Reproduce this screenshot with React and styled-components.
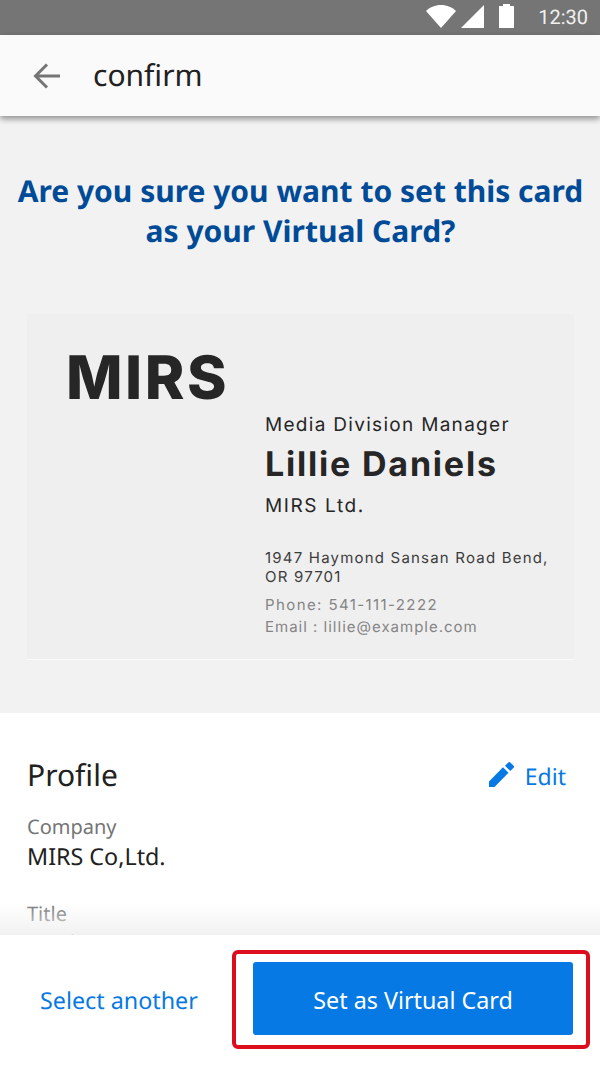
import styled, { createGlobalStyle } from "styled-components";

const GlobalStyle = createGlobalStyle`
  html, body {
    margin: 0;
    padding: 0;
    background: #fff;
    font-family: "Noto Sans", sans-serif;
    text-rendering: geometricPrecision;
  }
  * {
    box-sizing: border-box;
  }
`;

const App = () => (
  <Screen>
    <GlobalStyle />
    <StatusBar>
      <svg width="30" height="23" viewBox="0 0 30 23">
        <path d="M0 6C3.500 2.500 9 0 15 0s11.500 2.500 15 6L15 23z" fill="#fff" />
      </svg>
      <svg width="23" height="23" viewBox="0 0 23 23">
        <path d="M0 23L23 0v23z" fill="#fff" />
      </svg>
      <Battery />
      <Clock>12:30</Clock>
    </StatusBar>
    <Header>
      <svg width="30" height="30" viewBox="0 0 30 30">
        <path d="M28 15H5M15 3.500L3.500 15 15 26.500" fill="none" stroke="#757575" strokeWidth="3" />
      </svg>
      <HeaderTitle>confirm</HeaderTitle>
    </Header>
    <Main>
      <Question>
        Are you sure you want to set this card
        <br />
        as your Virtual Card?
      </Question>
      <Card>
        <Logo>MIRS</Logo>
        <CardInfo>
          <JobTitle>Media Division Manager</JobTitle>
          <Name>Lillie Daniels</Name>
          <CardCompany>MIRS Ltd.</CardCompany>
          <Address>
            1947 Haymond Sansan Road Bend,
            <br />
            OR 97701
          </Address>
          <Contact $spacing="1.400px">Phone: 541-111-2222</Contact>
          <Contact $spacing="1px">Email : lillie@example.com</Contact>
        </CardInfo>
      </Card>
    </Main>
    <Profile>
      <ProfileHead>
        <ProfileTitle>Profile</ProfileTitle>
        <EditLink>
          <svg width="26" height="26" viewBox="0 0 26 26">
            <path d="M0 20.500V26h5.500L19.500 11.800l-5.500-5.500zM21.300 10l3.300-3.300a1.400 1.400 0 0 0 0-2L21.300 1.400a1.400 1.400 0 0 0-2 0L16 4.700z" fill="#0779e4" />
          </svg>
          <EditLabel>Edit</EditLabel>
        </EditLink>
      </ProfileHead>
      <FieldLabel>Company</FieldLabel>
      <FieldValue>MIRS Co,Ltd.</FieldValue>
      <FieldLabel $spaced>Title</FieldLabel>
      <FieldValue>Media Division Manager</FieldValue>
    </Profile>
    <Footer>
      <SelectLink>Select another</SelectLink>
      <PrimaryButton>Set as Virtual Card</PrimaryButton>
      <Highlight />
    </Footer>
  </Screen>
);

const Screen = styled.div`
  position: relative;
  width: 600px;
  height: 1067px;
  overflow: hidden;
  display: flex;
  flex-direction: column;
  background: #fff;
`;

const StatusBar = styled.div`
  height: 35px;
  flex: none;
  background: #757575;
  display: flex;
  align-items: flex-start;
  justify-content: flex-end;
  padding: 5px 12px 0 0;

  svg:nth-child(1) {
    margin-right: 5px;
  }
`;

const Battery = styled.div`
  position: relative;
  width: 15px;
  height: 22px;
  margin: 1px 24px 0 15px;
  background: #fff;

  &::before {
    content: "";
    position: absolute;
    top: -2px;
    left: 4px;
    width: 7px;
    height: 2px;
    background: #fff;
  }
`;

const Clock = styled.div`
  margin-top: -5px;
  font-family: Roboto, sans-serif;
  font-size: 20px;
  color: #f0f0f0;
  line-height: 35px;
`;

const Header = styled.header`
  position: relative;
  z-index: 1;
  height: 81px;
  flex: none;
  background: #fafafa;
  box-shadow: 0 3px 6px rgba(0, 0, 0, 0.4);
  display: flex;
  align-items: center;
  padding-left: 32px;
  gap: 31px;
`;

const HeaderTitle = styled.div`
  margin-top: -2px;
  font-size: 30px;
  color: #212121;
  line-height: 40px;
`;

const Main = styled.main`
  height: 597px;
  flex: none;
  background: #f2f2f2;
  padding: 55px 26px 0 27px;
`;

const Question = styled.h1`
  margin: 0 -20px;
  font-size: 30px;
  line-height: 40px;
  font-weight: 700;
  color: #004b97;
  text-align: center;
`;

const Card = styled.div`
  margin-top: 63px;
  height: 346px;
  background: #efefef;
  border-bottom: 1px solid #fafafa;
  padding: 37px 0 0 39px;
  display: flex;
  flex-direction: column;
  font-family: Inter, "Liberation Sans", sans-serif;
  color: #262626;
`;

const Logo = styled.div`
  font-size: 60px;
  line-height: 54px;
  font-weight: 800;
  letter-spacing: 2.500px;
`;

const CardInfo = styled.div`
  margin: 8px 0 0 199px;
  display: flex;
  flex-direction: column;
`;

const JobTitle = styled.div`
  font-size: 19px;
  line-height: 24px;
  letter-spacing: 1.300px;
`;

const Name = styled.div`
  margin-top: 8px;
  font-size: 34px;
  line-height: 40px;
  font-weight: 700;
  letter-spacing: 1.800px;
`;

const CardCompany = styled.div`
  margin-top: 9px;
  font-size: 19px;
  line-height: 24px;
  letter-spacing: 1.600px;
`;

const Address = styled.div`
  margin-top: 30px;
  font-size: 15px;
  line-height: 19px;
  letter-spacing: 1.200px;
  color: #3c3c3c;
`;

const Contact = styled.div`
  margin-top: 2px;
  font-size: 15px;
  line-height: 20px;
  letter-spacing: ${({ $spacing }) => $spacing};
  color: #858585;

  ${Address} + & {
    margin-top: 9px;
  }
`;

const Profile = styled.section`
  flex: 1;
  padding: 39px 34px 0 27px;
  background: #fff;
`;

const ProfileHead = styled.div`
  display: flex;
  justify-content: space-between;
  align-items: center;
  height: 42px;
  margin-bottom: 20px;
`;

const ProfileTitle = styled.h2`
  margin: 2px 0 0;
  font-size: 30px;
  font-weight: 400;
  color: #212121;
`;

const EditLink = styled.a`
  display: flex;
  align-items: center;
  gap: 10px;
  color: #0779e4;

  svg {
    margin-top: 2px;
  }
`;

const EditLabel = styled.span`
  margin-top: 5px;
  font-size: 23px;
`;

const FieldLabel = styled.div`
  margin-top: ${({ $spaced }) => ($spaced ? "30px" : "0")};
  font-size: 20px;
  line-height: 26px;
  color: #757575;
`;

const FieldValue = styled.div`
  margin-top: 1px;
  font-size: 23.300px;
  line-height: 30px;
  color: #212121;
`;

const Footer = styled.footer`
  position: absolute;
  left: 0;
  right: 0;
  bottom: 0;
  height: 132px;
  background: #fff;
  display: flex;
  align-items: flex-start;
  padding: 27px 27px 0 40px;

  &::before {
    content: "";
    position: absolute;
    left: 0;
    right: 0;
    top: -32px;
    height: 32px;
    background: linear-gradient(rgba(240, 240, 240, 0), rgba(240, 240, 240, 0.9));
  }
`;

const SelectLink = styled.a`
  width: 213px;
  padding-top: 2px;
  line-height: 73px;
  font-size: 23.300px;
  color: #0779e4;
`;

const PrimaryButton = styled.button`
  width: 320px;
  height: 73px;
  padding: 2px 0 0;
  border: 0;
  border-radius: 3px;
  background: #0779e4;
  color: #fff;
  font-family: inherit;
  font-size: 23.300px;
`;

const Highlight = styled.div`
  position: absolute;
  left: 232px;
  top: 15px;
  width: 358px;
  height: 99px;
  border: 4px solid #dc0d1c;
  border-radius: 6px;
`;

export default App;
